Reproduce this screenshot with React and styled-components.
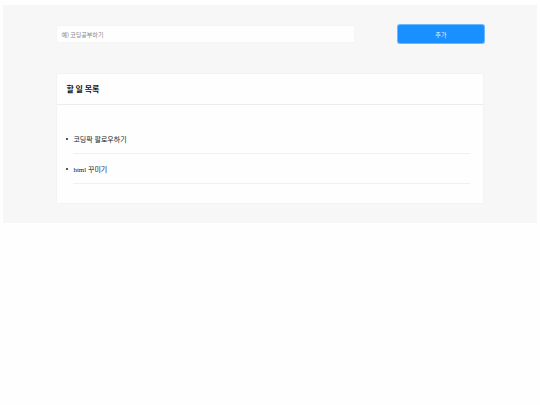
import React, { useState } from "react";
import styled, { createGlobalStyle } from "styled-components";

const GlobalStyle = createGlobalStyle`
  * { box-sizing: border-box; }
  body {
    margin: 5px 3px;
    background: #fefefe;
    color: #222;
    font-family: "Liberation Serif", "Noto Sans CJK KR", serif;
  }
`;

const Page = styled.main`
  padding: 20px 10% 19px;
  background: #f7f7f7;
`;

const AddForm = styled.form`
  display: flex;
  justify-content: space-between;
  height: 18px;
  margin-bottom: 30px;
`;

const TextBox = styled.input`
  width: 70%;
  padding: 0 4px;
  border: 1px solid #f5f5f5;
  border-radius: 2px;
  background: #fefefe;
  color: #333;
  font-family: "Noto Sans CJK KR", sans-serif;
  font-size: 6px;
  outline: none;

  &::placeholder {
    color: #858585;
    opacity: 1;
  }
`;

const AddButton = styled.button`
  width: 20%;
  padding: 0;
  border: 0;
  border-radius: 2px;
  background: #1890ff;
  box-shadow: 0 0 0 1px #6ab8ff;
  color: #e8f4ff;
  font-family: "Noto Sans CJK KR", sans-serif;
  font-size: 6px;
  cursor: pointer;
`;

const Card = styled.section`
  border: 1px solid #f3f3f3;
  border-radius: 1px;
  background: #fefefe;
`;

const CardTitle = styled.h2`
  margin: 0;
  padding: 0 9px;
  border-bottom: 1px solid #ececec;
  color: #111;
  font-family: "Noto Sans CJK KR", sans-serif;
  font-size: 8px;
  font-weight: 700;
  line-height: 30px;
`;

const List = styled.ul`
  margin: 0;
  padding: 19px 13px 19px 16px;
  list-style: none;
`;

const Item = styled.li`
  display: flex;
  align-items: center;
  height: 30px;
  border-bottom: 1px solid #f0f0f0;
  font-size: 7px;

  &::before {
    content: "";
    width: 2px;
    height: 2px;
    margin: 0 5px 0 -7px;
    border-radius: 50%;
    background: #222;
  }
`;

export default function App() {
  const [items, setItems] = useState(["코딩팍 팔로우하기", "html 꾸미기"]);
  const [text, setText] = useState("");

  const addItem = (event) => {
    event.preventDefault();
    if (!text.trim()) return;
    setItems([...items, text.trim()]);
    setText("");
  };

  return (
    <>
      <GlobalStyle />
      <Page>
        <AddForm onSubmit={addItem}>
          <TextBox
            type="text"
            aria-label="할 일"
            placeholder="예) 코딩공부하기"
            value={text}
            onChange={(event) => setText(event.target.value)}
          />
          <AddButton type="submit">추가</AddButton>
        </AddForm>
        <Card>
          <CardTitle>할 일 목록</CardTitle>
          <List>
            {items.map((item, index) => (
              <Item key={index}>{item}</Item>
            ))}
          </List>
        </Card>
      </Page>
    </>
  );
}
